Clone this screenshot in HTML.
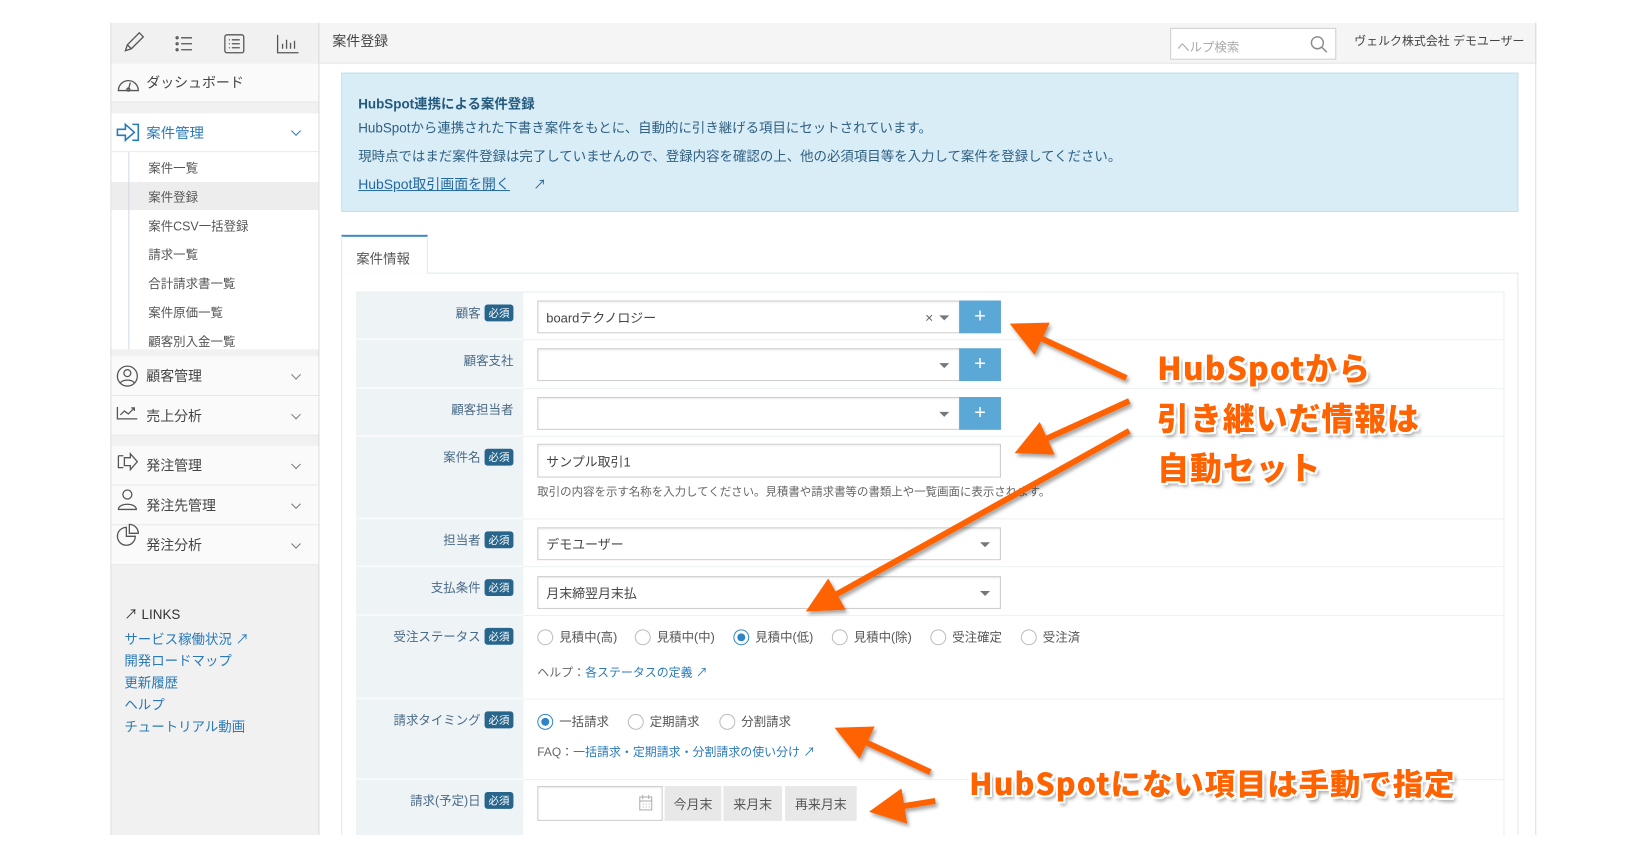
<!DOCTYPE html>
<html><head><meta charset="utf-8"><style>
*{box-sizing:border-box;margin:0;padding:0}
html,body{width:1648px;height:850px;overflow:hidden;background:#fff}
body{font-family:"Liberation Sans","Noto Sans CJK JP",sans-serif;font-size:13px;color:#444}
#root{position:relative;width:1648px;height:850px;overflow:hidden;background:#fff}
#w{position:absolute;left:0;top:0;width:1648px;height:860px;transform:scale(0.995);transform-origin:0 0}
.a{position:absolute}
.side{left:111px;top:23px;width:210px;height:840px;background:#f1f1f1;border-left:1px solid #ddd;border-right:1px solid #ddd}
.row{position:absolute;left:112px;width:208px;background:#fafafa;border-bottom:1px solid #e6e6e6;font-size:14px;color:#444}
.row span{position:absolute;left:35px;top:50%;transform:translateY(-50%)}
.row i{position:absolute;right:19px;top:50%;width:7px;height:7px;border-right:1.3px solid #777;border-bottom:1.3px solid #777;transform:translateY(-70%) rotate(45deg)}
.sub{position:absolute;left:149px;font-size:12.5px;color:#555;transform:translateY(-50%)}
.lk{position:absolute;left:125px;font-size:13.5px;color:#2a7ab8;transform:translateY(-50%)}
.lbl{position:absolute;left:358px;width:168px;background:#eef3f5;border-bottom:2px solid #f8fafb}
.lt{position:absolute;right:10px;top:10px;font-size:12.5px;color:#4a6a88;white-space:nowrap}
.req{display:inline-block;background:#27658d;color:#fff;font-size:10.5px;padding:1px 4px;border-radius:3px;margin-left:4px;vertical-align:1px}
.in{position:absolute;background:#fff;border:1px solid #ccc;box-shadow:inset 0 1px 2px rgba(0,0,0,.08);font-size:13px;color:#444;padding-left:8px;display:flex;align-items:center}
.tri{position:absolute;right:10px;top:50%;margin-top:-2px;border-left:5px solid transparent;border-right:5px solid transparent;border-top:5px solid #777}
.plus{position:absolute;background:#5ba7d6;color:#fff;font-size:20px;text-align:center;line-height:32px;width:42px;height:33px}
.rl{position:absolute;left:526px;width:986px;border-bottom:1px solid #edf1f3}
.rad{position:absolute;font-size:12.5px;color:#555;transform:translateY(-50%);white-space:nowrap}
.rad b{display:inline-block;width:16px;height:16px;border:1px solid #bbb;border-radius:50%;vertical-align:-4px;margin-right:6px;background:#fff;position:relative}
.rad b.on::after{content:"";position:absolute;left:3px;top:3px;width:8px;height:8px;border-radius:50%;background:#2f84c9}
.rad b.on{border-color:#2f84c9}
.ann{position:absolute;font-family:"Noto Sans CJK JP",sans-serif;font-weight:900;color:#ff6200;font-size:32px;white-space:nowrap;text-shadow:-2px -2px 0 #fff,2px -2px 0 #fff,-2px 2px 0 #fff,2px 2px 0 #fff,0 2px 0 #fff,2px 0 0 #fff,-2px 0 0 #fff,0 -2px 0 #fff,3px 4px 4px rgba(0,0,0,.35);letter-spacing:1px}
.btn{position:absolute;top:790px;height:35px;background:#e8e8e8;font-size:13px;color:#555;display:flex;align-items:center;justify-content:center}
</style></head><body><div id="root"><div id="w">

<div class="a" style="left:111px;top:23px;width:1433px;height:41px;background:#f5f5f5;border-bottom:1px solid #e3e3e3;border-left:1px solid #ddd;border-right:1px solid #ddd"></div>
<div class="side a"></div>
<div class="a" style="left:320px;top:23px;width:1px;height:840px;background:#ddd"></div>
<div class="a" style="left:1543px;top:23px;width:1px;height:840px;background:#ddd"></div>
<svg class="a" style="left:118px;top:28px" width="200" height="32" fill="none" stroke="#555" stroke-width="1.3">
<path d="M8 23 L10 17 L22 5 L26 9 L14 21 Z M10 17 L14 21"/>
<g><circle cx="60" cy="10" r="1"/><circle cx="60" cy="16" r="1"/><circle cx="60" cy="22" r="1"/><path d="M64 10h11M64 16h11M64 22h11"/></g>
<rect x="108" y="7" width="19" height="18" rx="2"/><path d="M112 12h1M115 12h8M112 16h1M115 16h8M112 20h1M115 20h8"/>
<path d="M161 7v18h21M166 21v-5M170 21v-9M174 21v-6M178 21v-8"/>
</svg>
<div class="a" style="left:334px;top:31px;font-size:14px;color:#444">案件登録</div>
<div class="a" style="left:1176px;top:28px;width:167px;height:32px;background:#fff;border:1px solid #ccc;font-size:12.5px;color:#aaa;padding:8px 6px">ヘルプ検索</div>
<svg class="a" style="left:1316px;top:35px" width="20" height="20" fill="none" stroke="#888" stroke-width="1.4"><circle cx="8" cy="8" r="6"/><path d="M12.5 12.5l5 5"/></svg>
<div class="a" style="left:1361px;top:32px;font-size:12px;color:#444">ヴェルク株式会社 デモユーザー</div>

<div class="row" style="top:64px;height:39px"><span>ダッシュボード</span></div>
<svg class="a" style="left:116px;top:71px" width="26" height="26" fill="none" stroke="#555" stroke-width="1.3"><path d="M3 20a10 10 0 1 1 20 0 Z"/><path d="M13 19l2-7"/><circle cx="13" cy="19" r="1.5"/></svg>
<div class="row" style="top:114px;height:39px;background:#fff"><span style="color:#2a7ab8;font-size:14.5px">案件管理</span><i style="border-color:#2a7ab8"></i></div>
<svg class="a" style="left:116px;top:122px" width="26" height="22" fill="none" stroke="#2a7ab8" stroke-width="1.6"><path d="M2 8h8V3l9 8-9 8v-5H2Z"/><path d="M17 3h6v16h-6"/></svg>
<div class="a" style="left:112px;top:153px;width:208px;height:198px;background:#fff"></div>
<div class="a" style="left:112px;top:183px;width:208px;height:28px;background:#ededed"></div>
<div class="a" style="left:129px;top:153px;width:1px;height:198px;background:#cfd8e3"></div>
<div class="sub" style="top:168px">案件一覧</div>
<div class="sub" style="top:197px">案件登録</div>
<div class="sub" style="top:226px">案件CSV一括登録</div>
<div class="sub" style="top:255px">請求一覧</div>
<div class="sub" style="top:284px">合計請求書一覧</div>
<div class="sub" style="top:313px">案件原価一覧</div>
<div class="sub" style="top:342px">顧客別入金一覧</div>
<div class="row" style="top:358px;height:40px"><span>顧客管理</span><i></i></div>
<div class="row" style="top:398px;height:40px"><span>売上分析</span><i></i></div>
<div class="row" style="top:448px;height:40px"><span>発注管理</span><i></i></div>
<div class="row" style="top:488px;height:40px"><span>発注先管理</span><i></i></div>
<div class="row" style="top:528px;height:40px"><span>発注分析</span><i></i></div>
<svg class="a" style="left:116px;top:364px" width="26" height="200" fill="none" stroke="#555" stroke-width="1.3">
<circle cx="12" cy="14" r="10"/><circle cx="12" cy="11" r="3.5"/><path d="M5 21c2-4 12-4 14 0"/>
<path d="M2 45v12h20M5 53l4-4 4 3 6-6M16 46h3v3"/>
<path d="M3 94v12h5M3 94h5M9 96h6v-4l7 8-7 8v-4H9Z"/>
<circle cx="12" cy="133" r="4.5"/><path d="M3 148c0-7 18-7 18 0Z"/>
<path d="M11 166a9 9 0 1 0 9 9h-9Z M14 163a9 9 0 0 1 9 9h-9Z"/>
</svg>
<div class="a" style="left:125px;top:606px;font-size:13.5px;color:#333">↗ LINKS</div>
<div class="lk" style="top:641px">サービス稼働状況 ↗</div>
<div class="lk" style="top:663px">開発ロードマップ</div>
<div class="lk" style="top:685px">更新履歴</div>
<div class="lk" style="top:707px">ヘルプ</div>
<div class="lk" style="top:729px">チュートリアル動画</div>

<div class="a" style="left:343px;top:73px;width:1183px;height:140px;background:#d9edf7;border:1px solid #bce0f0"></div>
<div class="a" style="left:360px;top:93px;font-size:13.5px;font-weight:bold;color:#235a7e">HubSpot連携による案件登録</div>
<div class="a" style="left:360px;top:117px;font-size:13.5px;color:#2f5f82">HubSpotから連携された下書き案件をもとに、自動的に引き継げる項目にセットされています。</div>
<div class="a" style="left:360px;top:146px;font-size:13.5px;color:#2f5f82">現時点ではまだ案件登録は完了していませんので、登録内容を確認の上、他の必須項目等を入力して案件を登録してください。</div>
<div class="a" style="left:360px;top:175px;font-size:14px;color:#2468a0;text-decoration:underline">HubSpot取引画面を開く</div>
<div class="a" style="left:536px;top:175px;font-size:13px;color:#2468a0">↗</div>

<div class="a" style="left:343px;top:274px;width:1183px;height:600px;border:1px solid #dfe6ea"></div>
<div class="a" style="left:343px;top:236px;width:87px;height:39px;background:#fff;border:1px solid #dfe6ea;border-top:2px solid #3b8ac4;border-bottom:none;font-size:13.5px;color:#555;padding:11px 14px">案件情報</div>
<div class="a" style="left:358px;top:293px;width:1154px;height:580px;border:1px solid #e8eef1"></div>

<div class="lbl" style="top:294px;height:48px"><div class="lt">顧客<span class="req">必須</span></div></div>
<div class="lbl" style="top:342px;height:49px"><div class="lt">顧客支社</div></div>
<div class="lbl" style="top:391px;height:48px"><div class="lt">顧客担当者</div></div>
<div class="lbl" style="top:439px;height:83px"><div class="lt">案件名<span class="req">必須</span></div></div>
<div class="lbl" style="top:522px;height:48px"><div class="lt">担当者<span class="req">必須</span></div></div>
<div class="lbl" style="top:570px;height:49px"><div class="lt">支払条件<span class="req">必須</span></div></div>
<div class="lbl" style="top:619px;height:84px"><div class="lt">受注ステータス<span class="req">必須</span></div></div>
<div class="lbl" style="top:703px;height:81px"><div class="lt">請求タイミング<span class="req">必須</span></div></div>
<div class="lbl" style="top:784px;height:90px"><div class="lt">請求(予定)日<span class="req">必須</span></div></div>
<div class="rl" style="top:341px"></div><div class="rl" style="top:390px"></div><div class="rl" style="top:438px"></div><div class="rl" style="top:521px"></div><div class="rl" style="top:569px"></div><div class="rl" style="top:618px"></div><div class="rl" style="top:702px"></div><div class="rl" style="top:783px"></div>

<div class="in" style="left:540px;top:302px;width:425px;height:33px">boardテクノロジー<span style="position:absolute;right:26px;color:#666;font-size:14px">×</span><div class="tri"></div></div>
<div class="plus" style="left:964px;top:302px">+</div>
<div class="in" style="left:540px;top:350px;width:425px;height:33px"><div class="tri"></div></div>
<div class="plus" style="left:964px;top:350px">+</div>
<div class="in" style="left:540px;top:399px;width:425px;height:33px"><div class="tri"></div></div>
<div class="plus" style="left:964px;top:399px">+</div>
<div class="in" style="left:540px;top:446px;width:466px;height:34px">サンプル取引1</div>
<div class="a" style="left:540px;top:486px;font-size:11.5px;color:#666">取引の内容を示す名称を入力してください。見積書や請求書等の書類上や一覧画面に表示されます。</div>
<div class="in" style="left:540px;top:530px;width:466px;height:33px">デモユーザー<div class="tri"></div></div>
<div class="in" style="left:540px;top:579px;width:466px;height:33px">月末締翌月末払<div class="tri"></div></div>

<div class="rad" style="left:540px;top:639px"><b></b>見積中(高)</div>
<div class="rad" style="left:638px;top:639px"><b></b>見積中(中)</div>
<div class="rad" style="left:737px;top:639px"><b class="on"></b>見積中(低)</div>
<div class="rad" style="left:836px;top:639px"><b></b>見積中(除)</div>
<div class="rad" style="left:935px;top:639px"><b></b>受注確定</div>
<div class="rad" style="left:1026px;top:639px"><b></b>受注済</div>
<div class="a" style="left:540px;top:667px;font-size:12px;color:#666">ヘルプ：<span style="color:#2a7ab8">各ステータスの定義 ↗</span></div>
<div class="rad" style="left:540px;top:724px"><b class="on"></b>一括請求</div>
<div class="rad" style="left:631px;top:724px"><b></b>定期請求</div>
<div class="rad" style="left:723px;top:724px"><b></b>分割請求</div>
<div class="a" style="left:540px;top:747px;font-size:12px;color:#666">FAQ：<span style="color:#2a7ab8">一括請求・定期請求・分割請求の使い分け ↗</span></div>
<div class="in" style="left:540px;top:790px;width:126px;height:35px"></div>
<svg class="a" style="left:641px;top:798px" width="16" height="18" fill="none" stroke="#aaa" stroke-width="1"><rect x="2" y="3" width="12" height="13"/><path d="M2 7h12M5 1v4M11 1v4M5 10h1M8 10h1M11 10h1M5 13h1M8 13h1M11 13h1"/></svg>
<div class="btn" style="left:668px;width:57px">今月末</div>
<div class="btn" style="left:727px;width:59px">来月末</div>
<div class="btn" style="left:789px;width:72px">再来月末</div>

<svg class="a" style="left:0;top:0" width="1648" height="860">
<defs><filter id="sh"><feDropShadow dx="2" dy="3" stdDeviation="2" flood-opacity=".35"/></filter>
<marker id="h" markerWidth="6" markerHeight="6" refX="1" refY="3" orient="auto" markerUnits="strokeWidth"><path d="M0 0L6 3L0 6Z" fill="#ff6200"/></marker></defs>
<g stroke="#ff6200" stroke-width="6" fill="none" marker-end="url(#h)" filter="url(#sh)">
<path d="M1132 380L1042 338"/>
<path d="M1135 403L1047 443"/>
<path d="M1135 433L836 600"/>
<path d="M935 776L866 744"/>
<path d="M940 805L903 811"/>
</g></svg>

<div class="ann" style="left:1163px;top:346px">HubSpotから</div>
<div class="ann" style="left:1163px;top:396px">引き継いだ情報は</div>
<div class="ann" style="left:1163px;top:446px">自動セット</div>
<div class="ann" style="left:974px;top:764px;font-size:30.5px">HubSpotにない項目は手動で指定</div>
</div>
<div class="a" style="left:0;top:835px;width:1648px;height:15px;background:#fff"></div>
</div></body></html>
